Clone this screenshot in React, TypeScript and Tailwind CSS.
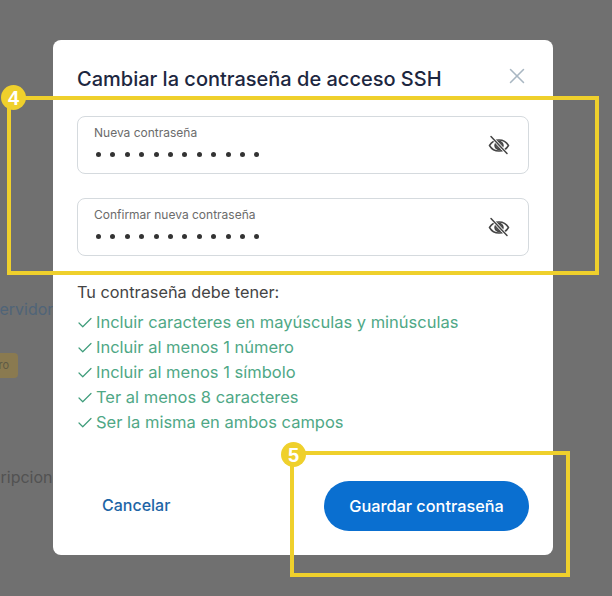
import { Check, X } from "lucide-react";

const font = "font-['Inter',sans-serif]";

const rules = [
  "Incluir caracteres en mayúsculas y minúsculas",
  "Incluir al menos 1 número",
  "Incluir al menos 1 símbolo",
  "Ter al menos 8 caracteres",
  "Ser la misma en ambos campos",
];

const EyeOff = () => (
  <svg width="24" height="24" viewBox="0 0 24 24" fill="none" stroke="#444" strokeWidth="1.5" strokeLinecap="round">
    <path d="M2.5 12.5c2.2-3.8 5.4-5.6 9.5-5.6s7.3 1.8 9.5 5.6c-2.2 3.8-5.4 5.6-9.5 5.6s-7.3-1.8-9.5-5.6z" />
    <circle cx="12" cy="12.5" r="4" fill="#555" />
    <path d="M5 4.5l15 16" stroke="#fff" strokeWidth="3" />
    <path d="M4 3.5l16 17" />
  </svg>
);

const PasswordField = ({ label }: { label: string }) => (
  <div className="flex h-[58px] items-center justify-between rounded-lg border border-[#d5dade] pl-4 pr-[17px]">
    <div className="self-start pt-[9px]">
      <div className="text-[12px] leading-[14px] text-[#6b6b6b]">{label}</div>
      <div className="mt-[12px] flex gap-[9.4px] pl-[2px]">
        {Array.from({ length: 12 }).map((_, i) => (
          <span key={i} className="size-[5px] rounded-full bg-[#333]" />
        ))}
      </div>
    </div>
    <EyeOff />
  </div>
);

const Badge = ({ n, className }: { n: number; className: string }) => (
  <div
    className={`absolute flex size-[25px] items-center justify-center rounded-full bg-[#efd02c] font-['Liberation_Sans',sans-serif] text-[20px] font-bold text-white ${className}`}
  >
    {n}
  </div>
);

export default function App() {
  return (
    <div className={`relative h-[596px] w-[612px] overflow-hidden bg-[#707070] ${font}`}>
      {/* page behind the overlay */}
      <div className="flex flex-col items-start pt-[299px] text-[16px] text-[#4f6478]">
        <div className="-ml-[9px] leading-[20px]">servidores</div>
        <div className="-ml-[20px] mt-[34px] flex h-[25px] w-[38px] items-center justify-end rounded bg-[#8a7a50] pr-[9px] text-[11px] text-[#5f5a45]">
          ro
        </div>
        <div className="-ml-[35px] mt-[89px] leading-[20px] text-[#525252]">suscripciones</div>
      </div>

      <div className="absolute left-[53px] top-[40px] h-[515px] w-[500px] rounded-lg bg-white px-6 pt-[26px]">
        <div className="flex items-start justify-between">
          <h1 className="text-[20px] font-medium leading-[26px] text-[#1d2740]">
            Cambiar la contraseña de acceso SSH
          </h1>
          <X className="mt-[-3px] mr-[-1px] size-[26px] text-[#a9b7c2]" strokeWidth={1.4} />
        </div>

        <div className="mt-6 flex flex-col gap-6">
          <PasswordField label="Nueva contraseña" />
          <PasswordField label="Confirmar nueva contraseña" />
        </div>

        <p className="mt-[25px] text-[16.3px] leading-[22px] text-[#444]">Tu contraseña debe tener:</p>
        <ul className="mt-[7px] flex flex-col">
          {rules.map((r) => (
            <li key={r} className="flex h-[25px] items-center gap-[2px] text-[16.5px] text-[#4fa886]">
              <Check className="-ml-px size-[18px] text-[#3f9d7b]" strokeWidth={1.6} />
              {r}
            </li>
          ))}
        </ul>

        <div className="mt-[46px] flex items-center justify-between pl-[25px]">
          <button className="pb-[2px] text-[16px] font-medium text-[#1d65a6]">Cancelar</button>
          <button className="h-[50px] w-[205px] rounded-full bg-[#0a6fd0] text-[16.3px] font-medium text-white">
            Guardar contraseña
          </button>
        </div>
      </div>

      {/* annotation frames */}
      <div className="absolute left-[7px] top-[96px] h-[179px] w-[592px] border-[4px] border-[#efd02c]" />
      <Badge n={4} className="left-[1px] top-[85px]" />
      <div className="absolute left-[290px] top-[451px] h-[126px] w-[280px] border-[4px] border-[#efd02c]" />
      <Badge n={5} className="left-[281px] top-[442px]" />
    </div>
  );
}
